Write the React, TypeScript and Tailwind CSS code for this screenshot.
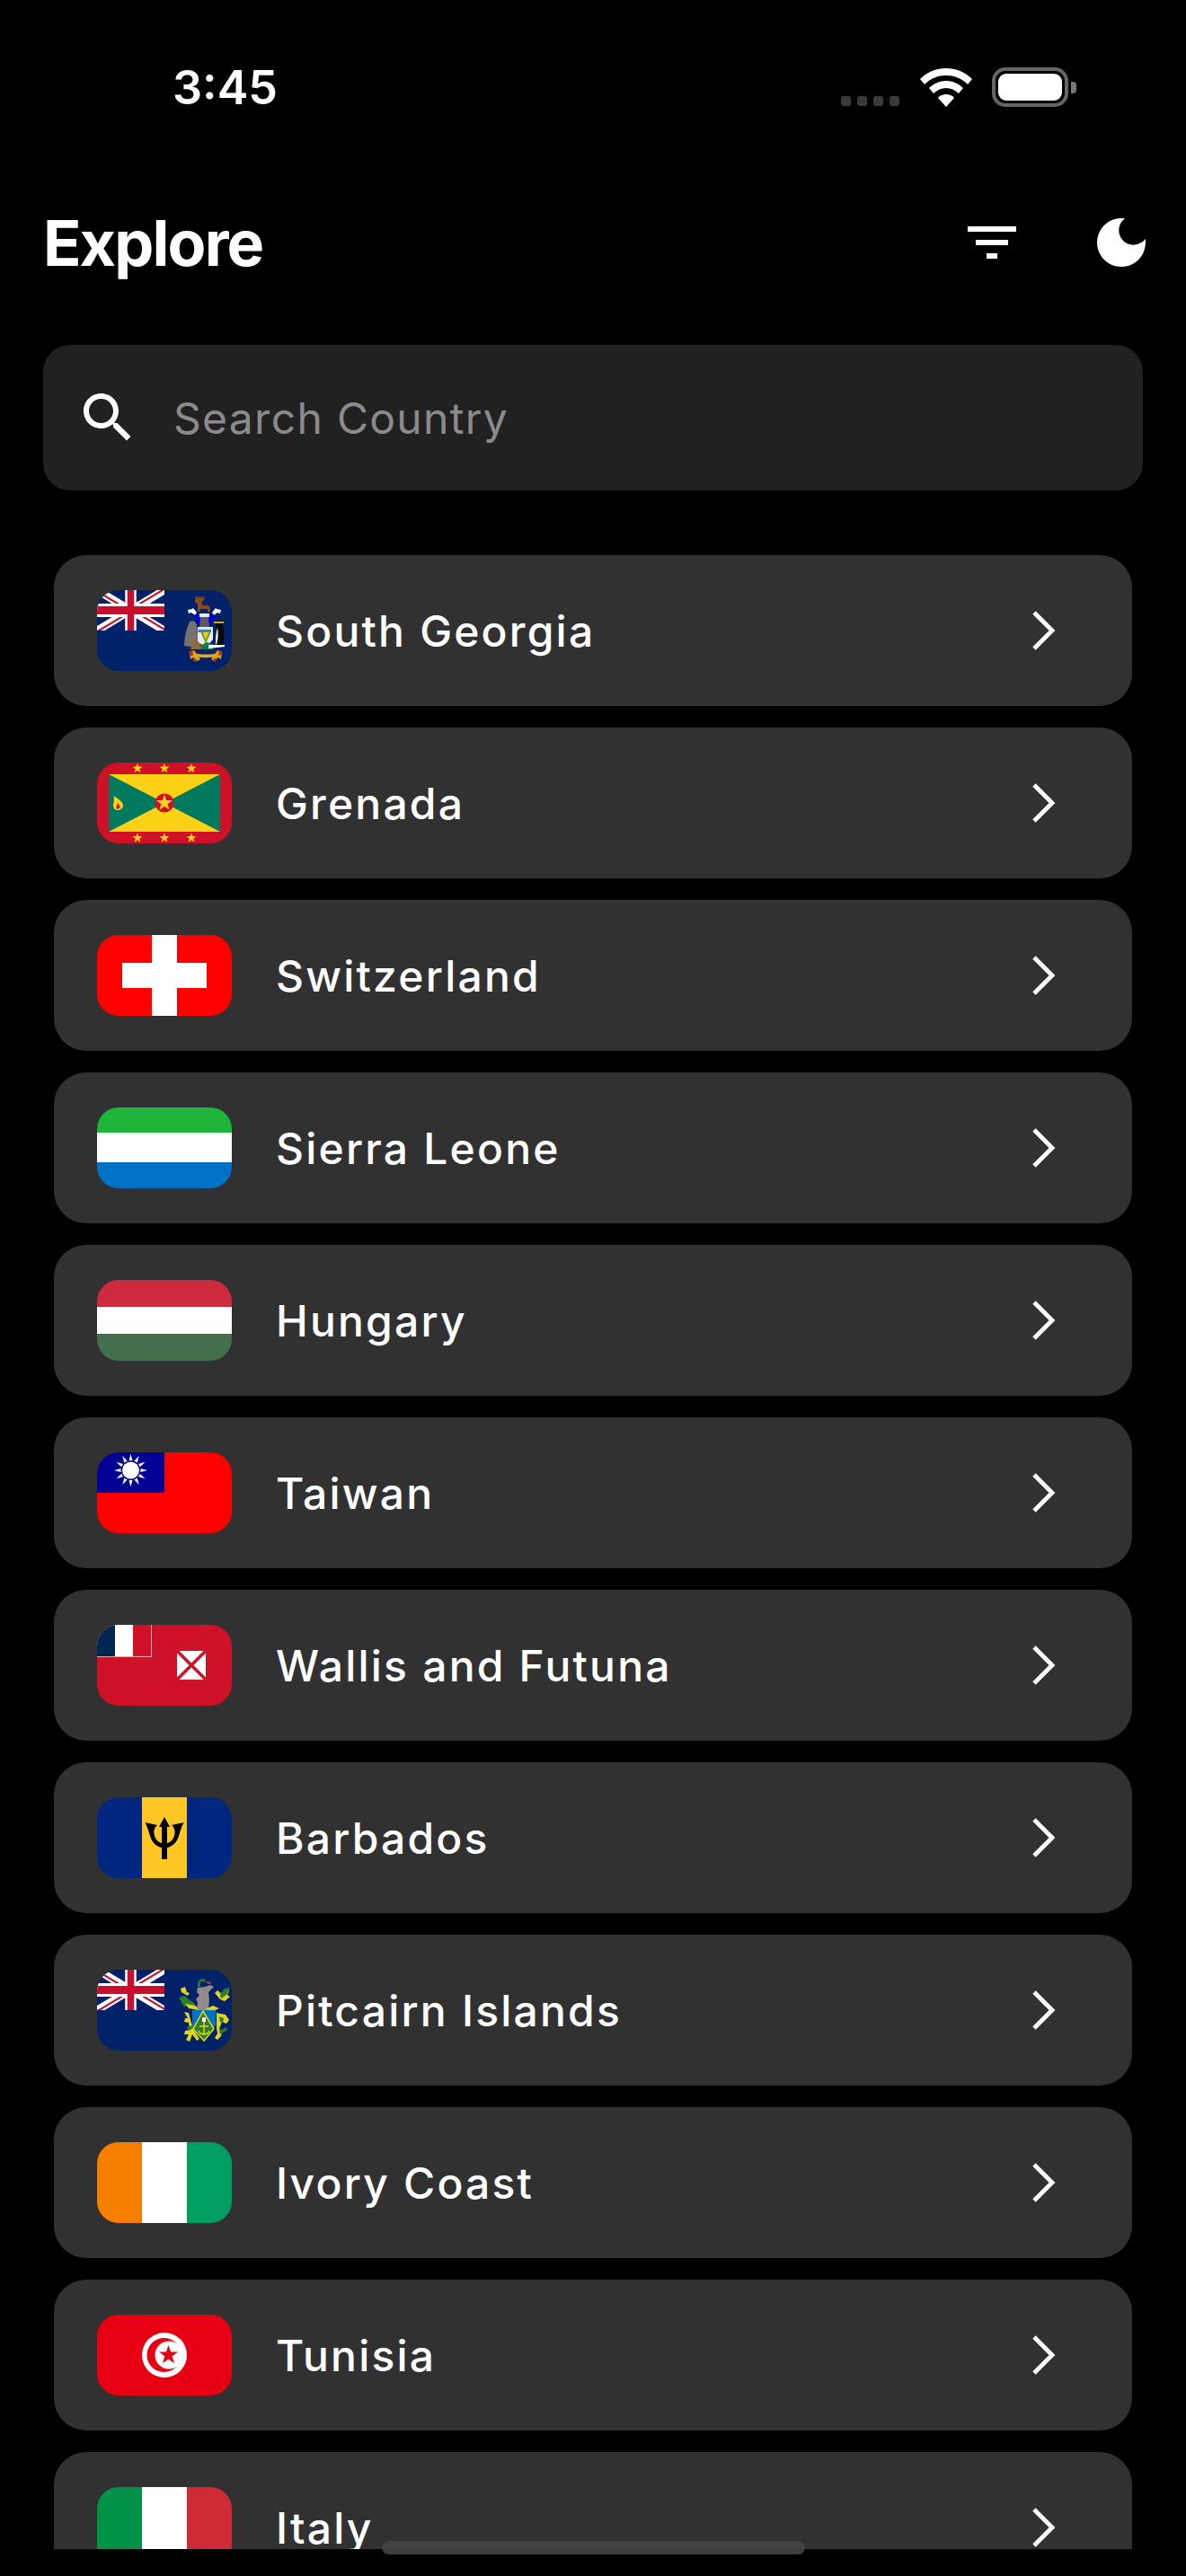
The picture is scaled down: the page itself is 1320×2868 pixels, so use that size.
import { ReactNode } from "react";

const UnionJack = ({ id }: { id: string }) => (
  <svg x="0" y="0" width="75" height="45" viewBox="0 0 60 30" preserveAspectRatio="none">
    <clipPath id={id}>
      <path d="M30 15h30v15zv15H0zH0V0zV0h30z" />
    </clipPath>
    <rect width="60" height="30" fill="#012169" />
    <path d="M0 0l60 30M60 0L0 30" stroke="#fff" strokeWidth="6" />
    <path d="M0 0l60 30M60 0L0 30" stroke="#C8102E" strokeWidth="3" clipPath={`url(#${id})`} />
    <path d="M30 0v30M0 15h60" stroke="#fff" strokeWidth="10" />
    <path d="M30 0v30M0 15h60" stroke="#C8102E" strokeWidth="6" />
  </svg>
);

const Star = ({ x, y, r, fill }: { x: number; y: number; r: number; fill: string }) => {
  const pts = Array.from({ length: 10 }, (_, i) => {
    const a = (Math.PI / 5) * i - Math.PI / 2;
    const d = i % 2 === 0 ? r : r * 0.4;
    return `${x + d * Math.cos(a)},${y + d * Math.sin(a)}`;
  }).join(" ");
  return <polygon points={pts} fill={fill} />;
};

const flags: Record<string, ReactNode> = {
  "South Georgia": (
    <>
      <rect width="150" height="90" fill="#012169" />
      <UnionJack id="gs" />
      {/* coat of arms */}
      <path d="M110 6l3 3 1-3 1 3 2-3 1 3 2-3-1 5-3 3 2 3h6l2 3v4h-3v-3h-8l-1 3h-2v-8l-3-3z" fill="#8a4b16" />
      <path d="M101 22l5-1 1-1 4 5-2 3-4-3-3 1zM138 22l-5-1-1-1-4 5 2 3 4-3 3 1z" fill="#fff" />
      <path d="M108 28l3-2 3 4h11l3-4 3 2-3 8-4 3h-9l-4-3z" fill="#0000d8" />
      <path d="M114 26h11v4h-11z" fill="#e8e8ff" />
      <path d="M115 30h9l1 11h-11z" fill="#5b5766" />
      <path d="M97 62c0-9 3-20 6-27 4-2 7 0 8 4l1 12-2 13z" fill="#77736c" />
      <path d="M104 66l4-12 6 0 3 12z" fill="#8a6a45" />
      <path d="M112 41h17v14l-8 9-9-7z" fill="#e6eef0" />
      <path d="M114 43l1 2 1-2 1 2 1-2 1 2 1-2 1 2 1-2 1 2 1-2 1 2 1-2 1 2v2h-15z" fill="#2a6fc0" />
      <path d="M115 46h12l-6 14z" fill="#7f9f1a" />
      <path d="M118 47h6l-3 8z" fill="#e8d21c" />
      <path d="M115 62l7-4 7 2 0 6h-12z" fill="#137a4d" />
      <path d="M132 36c3-1 6-1 8 2 2 8 2 16 0 23l-4 2h-4c1-9 1-18 0-27z" fill="#0b0b0b" />
      <path d="M134 42c1 6 1 12-1 18l-1 1c0-6 0-13 2-19z" fill="#fff" />
      <path d="M130 35h11v2h-11z" fill="#d8a51c" />
      <path d="M124 61h18v2l-18 2z" fill="#fff" />
      <path d="M107 70c8 2 22 2 28 0l1 3c-8 3-22 3-30 0z" fill="#e6a91e" />
      <path d="M103 69l5-2 7 10-3 2-5-4-3 2z" fill="#d8a51c" />
      <path d="M139 69l-5-2-7 10 3 2 5-4 3 2z" fill="#d8a51c" />
      <path d="M102 68l4-1 1 5-3 2zM107 76l3 1 1 3-4-1zM136 67l3 1-1 5-3-1zM130 76l3 0-1 4-3-1z" fill="#b8300e" />
    </>
  ),
  Grenada: (
    <>
      <rect width="150" height="90" fill="#CE1126" />
      <rect x="13" y="13" width="124" height="64" fill="#FCD116" />
      <path d="M13 13l62 32-62 32zM137 13L75 45l62 32z" fill="#007A5E" />
      <circle cx="75" cy="45" r="10.500" fill="#CE1126" />
      <Star x={75} y={45} r={9.500} fill="#FCD116" />
      {[45, 75, 105].map((x) => (
        <g key={x}>
          <Star x={x} y={6.500} r={5.800} fill="#FCD116" />
          <Star x={x} y={84} r={5.800} fill="#FCD116" />
        </g>
      ))}
      <path d="M18.500 37c5 3 10.500 7 10.500 11 0 3-3.500 5-6 5s-5-2-5-5c0-3 1.500-4 .5-11z" fill="#FCD116" />
      <path d="M23 45c2 2 3 4 2 6l-3 1c-1-2 0-5 1-7z" fill="#CE1126" />
    </>
  ),
  Switzerland: (
    <>
      <rect width="150" height="90" fill="#FF0000" />
      <path d="M61 0h28v31h33v28H89v31H61V59H28V31h33z" fill="#fff" />
    </>
  ),
  "Sierra Leone": (
    <>
      <rect width="150" height="28" fill="#1EB53A" />
      <rect y="28" width="150" height="33.500" fill="#fff" />
      <rect y="61" width="150" height="29" fill="#0072C6" />
    </>
  ),
  Hungary: (
    <>
      <rect width="150" height="30" fill="#CD2A3E" />
      <rect y="30" width="150" height="30" fill="#fff" />
      <rect y="60" width="150" height="30" fill="#436F4D" />
    </>
  ),
  Taiwan: (
    <>
      <rect width="150" height="90" fill="#FE0000" />
      <rect width="75" height="45" fill="#000095" />
      {Array.from({ length: 12 }, (_, i) => (
        <polygon key={i} points="34.800,12 40.200,12 37.500,1.500" fill="#fff" transform={`rotate(${i * 30} 37.500 20)`} />
      ))}
      <circle cx="37.500" cy="20" r="11" fill="#000095" />
      <circle cx="37.500" cy="20" r="9.500" fill="#fff" />
    </>
  ),
  "Wallis and Futuna": (
    <>
      <rect width="150" height="90" fill="#CE1126" />
      <rect width="61" height="36" fill="#f0a0ac" />
      <rect width="20" height="35" fill="#002654" />
      <rect x="20" width="20" height="35" fill="#fff" />
      <rect x="40" width="20" height="35" fill="#CE1126" />
      <rect x="89" y="29" width="32" height="32" fill="#fff" />
      <path d="M89 29l32 32M121 29L89 61" stroke="#CE1126" strokeWidth="3.500" />
    </>
  ),
  Barbados: (
    <>
      <rect width="150" height="90" fill="#00267F" />
      <rect x="50" width="50" height="90" fill="#FFC726" />
      <path d="M75 22l6 11h-3v18c5-1 8-6 8.500-11 .5-4-1-7-3.500-9l13.500-3c-2.500 5-4 10-5.500 15-2 7-7 12-13 13v13h-6V56c-6-1-11-6-13-13-1.500-5-3-10-5.500-15L67 31c-2.500 2-4 5-3.500 9 .5 5 3.500 10 8.500 11V33h-3z" fill="#000" />
    </>
  ),
  "Pitcairn Islands": (
    <>
      <rect width="150" height="90" fill="#012169" />
      <UnionJack id="pn" />
      {/* coat of arms */}
      <path d="M112 19c-1-5 2-9 6-9l3 2-1 2-3-1c-2 0-3 2-2 6z" fill="#2e7d2a" />
      <path d="M122 13l5 1-1 2-4-1z" fill="#c9452e" />
      <path d="M112 20l8-1 6-2 4 2-6 6 1 8-1 12h-13l1-9-2-3 4-5-3-3z" fill="#8f8b86" />
      <path d="M93 21l5-2 2 6 3 1-2 3-7-4zM147 23l-5-1-3 5-5-4-3 3 6 7 5 2 6-5-3-2z" fill="#dfd61c" />
      <path d="M91 31l6-2 4 3 8 6-2 3-8-2-2 3-3-6zM148 20l-4 8-6 4-1-5 5-6z" fill="#2e7d2a" />
      <path d="M98 38l12 2 3 5-11-2z" fill="#dfd61c" />
      <path d="M129 40l-9 4 10 2 6-3z" fill="#dfd61c" />
      <path d="M106 45h26v17l-13 17-13-17z" fill="#0072C6" />
      <path d="M118 46l12 20-11 13-12-13z" fill="#2e7d2a" stroke="#e4d91c" strokeWidth="1.500" />
      <rect x="117" y="53" width="4" height="5" fill="#fff" />
      <path d="M119 58v15M114 63h10M113 68c2 5 10 5 12 0" stroke="#e4d91c" strokeWidth="1.400" fill="none" />
      <path d="M97 47l5 1 3 11 3 9 6 9-3 2-5-7-3 8-4-2 3-6-5 0 1-4 5-1-1-8-5-1 1-4 3 0z" fill="#dfd61c" />
      <path d="M133 48l10 2 4 6-3 4-5-2-3 8 3 3-1 5-4 4-3-2 3-5-1-6z" fill="#dfd61c" />
      <path d="M136 52l5 2-1 5-3-1zM136 68l8-4 1 3-8 5zM100 64l6-2 1 3-5 3z" fill="#2e7d2a" />
    </>
  ),
  "Ivory Coast": (
    <>
      <rect width="50" height="90" fill="#F77F00" />
      <rect x="50" width="50" height="90" fill="#fff" />
      <rect x="100" width="50" height="90" fill="#009E60" />
    </>
  ),
  Tunisia: (
    <>
      <rect width="150" height="90" fill="#E70013" />
      <circle cx="75" cy="45" r="25" fill="#fff" />
      <circle cx="74.500" cy="45" r="19" fill="#E70013" />
      <circle cx="80" cy="45" r="15.500" fill="#fff" />
      <Star x={79.500} y={45} r={11} fill="#E70013" />
    </>
  ),
  Italy: (
    <>
      <rect width="50" height="90" fill="#009246" />
      <rect x="50" width="50" height="90" fill="#fff" />
      <rect x="100" width="50" height="90" fill="#CE2B37" />
    </>
  ),
};

const countries = Object.keys(flags);

function CountryRow({ name }: { name: string }) {
  return (
    <div className="flex h-[168px] shrink-0 items-center rounded-[36px] bg-[#313131] pl-[48px] pr-[84px]">
      <svg width="150" height="90" viewBox="0 0 150 90" className="shrink-0 rounded-[24px]">
        {flags[name]}
      </svg>
      <span className="ml-[49px] flex-1 pt-[1px] text-[48px] font-medium tracking-[2.2px] text-white">{name}</span>
      <svg width="28" height="46" viewBox="0 0 28 46" fill="none" className="shrink-0">
        <path d="M3 3l20 20L3 43" stroke="#fff" strokeWidth="4.800" />
      </svg>
    </div>
  );
}

export default function App() {
  return (
    <div className="relative flex h-[2868px] w-[1320px] flex-col overflow-hidden bg-black font-['Inter',sans-serif]">
      {/* status bar */}
      <div className="flex h-[234px] shrink-0 items-start justify-between pl-[192px] pr-[122px] pt-[65px]">
        <span className="text-[52px] font-semibold leading-[66px] text-white">3:45</span>
        <div className="flex items-end pt-[10px]">
          <div className="flex gap-[7px] pb-[1px]">
            <span className="h-[11px] w-[11px] rounded-[3px] bg-[#3a3a3a]" />
            <span className="h-[11px] w-[11px] rounded-[3px] bg-[#3a3a3a]" />
            <span className="h-[11px] w-[11px] rounded-[3px] bg-[#3a3a3a]" />
            <span className="h-[11px] w-[11px] rounded-[3px] bg-[#3a3a3a]" />
          </div>
          <svg width="58" height="43" viewBox="0 0 58 43" fill="#fff" className="ml-[23px]">
            <path d="M29 0c11 0 21 4 29 12l-5 6C46 11 38 8 29 8S12 11 5 18l-5-6C8 4 18 0 29 0z" />
            <path d="M29 14c7 0 14 3 19 8l-5 6c-4-4-9-6-14-6s-10 2-14 6l-5-6c5-5 12-8 19-8z" />
            <path d="M29 29c3 0 7 1 9 4l-9 10-9-10c2-3 6-4 9-4z" />
          </svg>
          <div className="ml-[22px] flex items-center">
            <div className="h-[44px] w-[85px] rounded-[15px] border-[4px] border-[#666] p-[3px]">
              <div className="h-full w-full rounded-[9px] bg-white" />
            </div>
            <div className="ml-[3px] h-[13px] w-[6px] rounded-r-[4px] bg-[#777]" />
          </div>
        </div>
      </div>

      {/* header */}
      <div className="flex h-[72px] shrink-0 items-center justify-between pl-[48px] pr-[36px]">
        <h1 className="pt-[2px] text-[70px] font-bold leading-none tracking-[-1.9px] text-white">Explore</h1>
        <div className="flex gap-[72px]">
          <svg width="72" height="72" viewBox="0 0 24 24" fill="#fff">
            <path d="M10 18h4v-2h-4v2zM3 6v2h18V6H3zm3 7h12v-2H6v2z" />
          </svg>
          <svg width="72" height="72" viewBox="0 0 24 24" fill="#fff">
            <path d="M12 3c-4.970 0-9 4.030-9 9s4.030 9 9 9 9-4.030 9-9c0-.46-.04-.92-.1-1.360-.98 1.370-2.580 2.260-4.400 2.260-2.980 0-5.400-2.420-5.400-5.400 0-1.810.89-3.420 2.260-4.400-.44-.06-.9-.1-1.360-.1z" />
          </svg>
        </div>
      </div>

      {/* search */}
      <div className="mx-[48px] mt-[78px] flex h-[162px] shrink-0 items-center gap-[37px] rounded-[30px] bg-[#212121] pl-[36px]">
        <svg width="72" height="72" viewBox="0 0 24 24" fill="#fff" className="shrink-0">
          <path d="M15.500 14h-.79l-.28-.27C15.410 12.590 16 11.110 16 9.500 16 5.910 13.090 3 9.500 3S3 5.910 3 9.500 5.910 16 9.500 16c1.610 0 3.090-.59 4.230-1.570l.27.28v.79l5 4.990L20.490 19l-4.990-5zm-6 0C7.010 14 5 11.990 5 9.500S7.010 5 9.500 5 14 7.010 14 9.500 11.990 14 9.500 14z" />
        </svg>
        <span className="pt-[1px] text-[48px] tracking-[1.3px] text-[#8b8b8b]">Search Country</span>
      </div>

      {/* list */}
      <div className="mx-[60px] mt-[72px] flex h-[2220px] shrink-0 flex-col gap-[24px] overflow-hidden">
        {countries.map((c) => (
          <CountryRow key={c} name={c} />
        ))}
      </div>

      {/* home indicator */}
      <div className="absolute left-[425px] top-[2829px] h-[15px] w-[471px] rounded-[8px] bg-[#444]/90" />
    </div>
  );
}
